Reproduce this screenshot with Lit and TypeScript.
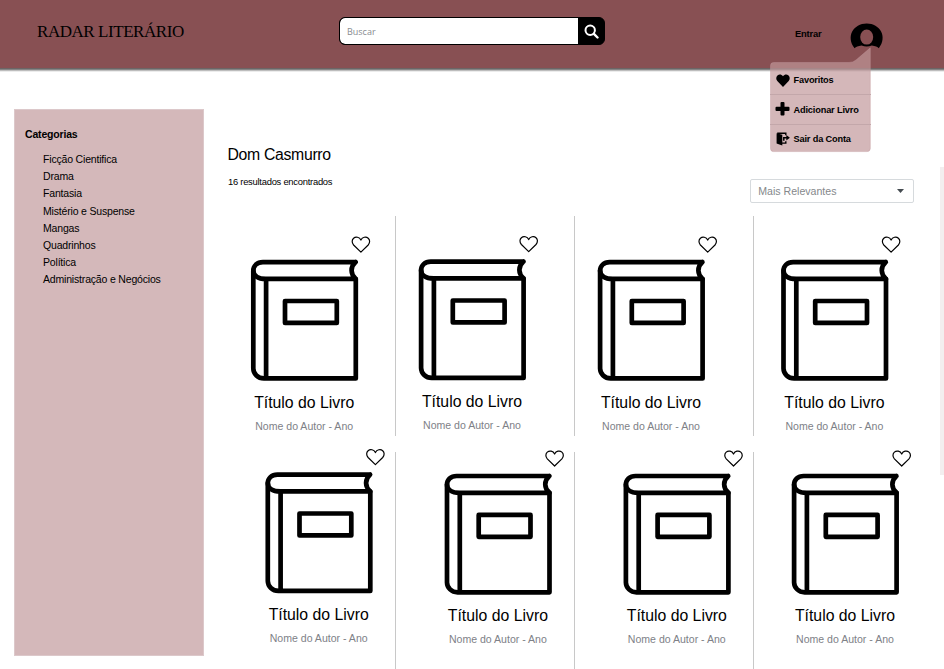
import { LitElement, html, svg, css } from "lit";
import { customElement, property } from "lit/decorators.js";
import { styleMap } from "lit/directives/style-map.js";

const CATEGORIES = [
  "Ficção Cientifica",
  "Drama",
  "Fantasia",
  "Mistério e Suspense",
  "Mangas",
  "Quadrinhos",
  "Política",
  "Administração e Negócios",
];

// Offset of each card inside its grid cell.
const BOOKS = [
  [34.4, 20.5], [22.2, 20], [22.2, 20.5], [26.6, 20.5],
  [48.9, -3], [48.1, -1.6], [48, -1.6], [37.2, -1.6],
].map(([dx, dy]) => ({ title: "Título do Livro", author: "Nome do Autor - Ano", dx, dy }));

const heartPath =
  "M9.5 15.6 L2.2 8.5 C0.2 6.3 0.4 3.2 2.2 1.7 C4.4 -0.2 8 0.5 9.5 3.6 C11 0.5 14.6 -0.2 16.8 1.7 C18.6 3.2 18.8 6.3 16.8 8.5 Z";

const menuIcons = {
  heart: svg`<path d="M7 14 L1.3 8 C-.3 6.2 0 3.5 1.7 2.2 C3.4 .9 5.7 1.4 7 3.3 C8.3 1.4 10.6 .9 12.3 2.2 C14 3.5 14.3 6.2 12.7 8 Z"/>`,
  plus: svg`<path d="M5.5 -1h2q1 0 1 1v3.7h4q1 0 1 1v2.2q0 1-1 1H8.5v3.7q0 1-1 1H5.5q-1 0-1-1V7.9H.5q-1 0-1-1V4.7q0-1 1-1h4V0q0-1 1-1z"/>`,
  exit: svg`<path d="M1.2 1.300 H9.800 V3.300 M9.800 9.300 V11.100 H6" fill="none" stroke="#000" stroke-width="1.400"/>
    <path d="M.6 1.200 L6.300 2.800 V13.600 L.6 11.500 Z"/>
    <path d="M7.800 8.800 V5.800 H11" fill="none" stroke="#000" stroke-width="1.500"/>
    <path d="M10.300 3 L13.900 5.800 L10.300 8.600 Z"/>`,
};

@customElement("book-card")
export class BookCard extends LitElement {
  @property() heading = "";
  @property() author = "";

  static styles = css`
    :host { display: block; width: 120px; font-family: "Liberation Sans", Arial, sans-serif; }
    .heart { display: block; margin-left: 100.5px; overflow: visible; }
    .book { display: block; margin-top: 7px; overflow: visible; }
    .text { width: 107.6px; text-align: center; white-space: nowrap; }
    .title { font-size: 15.8px; line-height: 20px; margin-top: 11.3px; color: #000; }
    .author { font-size: 10.55px; line-height: 14px; margin-top: 5.8px; color: #7e8187; }
  `;

  render() {
    return html`
      <svg class="heart" width="19" height="16" viewBox="0 0 19 16">
        <path d=${heartPath} fill="#fff" stroke="#000" stroke-width="1.2" stroke-linejoin="round" />
      </svg>
      <svg class="book" width="107" height="122" viewBox="0 0 107 122" fill="none"
        stroke="#000" stroke-width="4.7" stroke-linejoin="round" stroke-linecap="round">
        <path d="M105.2 2.6 H12.5 C6.5 2.6 2.9 6.5 2.9 11 C2.9 15.8 7 19.4 15.5 19.4 H105.400 C99.800 14.500 99.800 7.500 105.200 2.600" />
        <path d="M2.9 11 V109 C3 114.5 7.5 118.8 13.5 118.9 H105.4 V19.5 M15.7 20 V118.5" />
        <rect x="34.6" y="41.5" width="51.8" height="21.9" />
      </svg>
      <div class="text title">${this.heading}</div>
      <div class="text author">${this.author}</div>
    `;
  }
}

@customElement("user-menu")
export class UserMenu extends LitElement {
  static styles = css`
    :host { display: block; width: 101px; height: 106px; font-family: "Liberation Sans", Arial, sans-serif; }
    .shape { position: absolute; inset: 0; overflow: visible; }
    .list { position: relative; padding-top: 18px; }
    .item {
      display: flex; align-items: center; gap: 4px; height: 30px; padding-left: 6px;
      box-sizing: border-box; font-size: 9.2px; font-weight: 700; white-space: nowrap; letter-spacing: -0.15px;
      border-bottom: 1px solid #c3a7aa;
    }
    .item:last-child { border-bottom: 0; height: 27.5px; }
    .icon { flex: none; overflow: visible; }
  `;

  render() {
    const items = [
      { icon: menuIcons.heart, label: "Favoritos" },
      { icon: menuIcons.plus, label: "Adicionar Livro" },
      { icon: menuIcons.exit, label: "Sair da Conta" },
    ];
    return html`
      <svg class="shape" width="101" height="106" viewBox="0 0 101 106">
        <path d="M3.5 15.5 H79 Q83 15.5 86 13 L100.3 .8 V101.5 Q100.3 104.6 97 104.6 H3.5 Q.5 104.6 .5 101.5 V18.5 Q.5 15.5 3.5 15.5 Z"
          fill="rgba(192,151,154,.69)" stroke="rgba(192,151,154,.5)" stroke-width=".8" />
      </svg>
      <div class="list">
        ${items.map((i) => html`
          <div class="item">
            <svg class="icon" width="14" height="14" viewBox="0 0 14 14">${i.icon}</svg>
            <span>${i.label}</span>
          </div>`)}
      </div>
    `;
  }
}

@customElement("app-root")
export class AppRoot extends LitElement {
  static styles = css`
    :host {
      display: block; position: relative; width: 944px; height: 669px; overflow: hidden;
      background: #fff; color: #000; font-family: "Liberation Sans", Arial, sans-serif;
    }
    .header {
      display: flex; align-items: flex-start; height: 68px; background: #885053;
      box-shadow: 0 1px 0 #6c6565, 0 2px 0 #858585, 0 3px 0 #bdbdbd, 0 4px 0 #ececec;
    }
    .brand {
      width: 301.5px; padding: 20.5px 0 0 37px; font-family: "Liberation Serif", serif;
      font-size: 17px; line-height: 22px; letter-spacing: -0.45px; white-space: nowrap;
    }
    .search {
      display: flex; margin-top: 17px; width: 266.5px; height: 28px; box-sizing: border-box;
      border: 1.5px solid #000; border-radius: 6px; background: #000; overflow: hidden;
    }
    .field {
      flex: 1; background: #fff; border-radius: 5px 0 0 5px; padding-left: 7.5px;
      font: 9px/27px "Open Sans", sans-serif; color: #888c90;
    }
    .go { width: 26px; display: flex; align-items: center; justify-content: center; }
    .enter { margin: 28px 0 0 190px; width: 55px; font-size: 9.4px; line-height: 12px; font-weight: 700; letter-spacing: -0.2px; }
    .avatar { margin-top: 22.5px; overflow: visible; }
    .menu { position: absolute; left: 769.5px; top: 47px; z-index: 2; }
    .body { display: flex; height: 601px; }
    .sidebar {
      margin: 41px 0 0 14px; width: 190px; height: 547px; box-sizing: border-box;
      background: #d4b8ba; border: 1px solid #dcc8ca; padding: 17px 0 0 10px;
    }
    .heading { font-size: 10.5px; line-height: 14px; font-weight: 700; margin-bottom: 10.3px; letter-spacing: -0.18px; }
    .category { padding-left: 18px; font-size: 10.5px; line-height: 17.1px; white-space: nowrap; letter-spacing: -0.18px; }
    .results { width: 740px; }
    .top { display: flex; justify-content: space-between; height: 147.5px; }
    .query { padding: 76.5px 0 0 23.5px; font-size: 15.8px; line-height: 20px; letter-spacing: -0.32px; }
    .count { padding: 10.5px 0 0 24px; font-size: 9.4px; line-height: 14px; letter-spacing: -0.25px; }
    .sort {
      display: flex; align-items: center; justify-content: space-between; margin: 110.5px 30.5px 0 0;
      width: 163.5px; height: 24px; box-sizing: border-box; padding: 0 9px 0 7.2px;
      border: 1px solid #d6dadd; border-radius: 2px; font-size: 10.6px; color: #85888b;
    }
    .grid {
      display: grid; grid-template-columns: 180px 179px 179px 190px;
      grid-template-rows: 220.5px 217px; row-gap: 16px; margin-left: 12px;
    }
    .cell { border-right: 1px solid #c8c8c8; box-sizing: border-box; }
    .cell:nth-child(4n) { border-right: 0; }
    .scroll { position: absolute; left: 940px; top: 167px; width: 4px; height: 308px; background: #f3eeef; }
  `;

  render() {
    return html`
      <header class="header">
        <div class="brand">RADAR LITERÁRIO</div>
        <div class="search">
          <div class="field">Buscar</div>
          <div class="go">
            <svg width="15" height="15" viewBox="0 0 15 15" fill="none" stroke="#fff" stroke-linecap="round">
              <circle cx="6.2" cy="6.2" r="4.7" stroke-width="2" />
              <path d="M9.9 9.9 L13.5 13.5" stroke-width="2.4" />
            </svg>
          </div>
        </div>
        <div class="enter">Entrar</div>
        <svg class="avatar" width="34" height="26" viewBox="0 0 34 26">
          <path d="M4.600 25.200 C-4.500 13.500 3.500 .4 16.700 .4 C29.900 .4 37.900 13.500 28.800 25.200 Q27 23.300 21.800 22.500 Q16.700 24.500 11.600 22.500 Q6.400 23.300 4.600 25.200 Z" />
          <ellipse cx="16.700" cy="14.100" rx="6.500" ry="7.500" fill="#885053" />
        </svg>
      </header>
      <user-menu class="menu"></user-menu>
      <main class="body">
        <nav class="sidebar">
          <div class="heading">Categorias</div>
          ${CATEGORIES.map((c) => html`<div class="category">${c}</div>`)}
        </nav>
        <section class="results">
          <div class="top">
            <div>
              <div class="query">Dom Casmurro</div>
              <div class="count">16 resultados encontrados</div>
            </div>
            <div class="sort">
              <span>Mais Relevantes</span>
              <svg width="7" height="4" viewBox="0 0 7 4"><path d="M0 0H7L3.5 4Z" fill="#444b50" /></svg>
            </div>
          </div>
          <div class="grid">
            ${BOOKS.map((b) => html`
              <div class="cell">
                <book-card .heading=${b.title} .author=${b.author}
                  style=${styleMap({ transform: `translate(${b.dx}px, ${b.dy}px)` })}></book-card>
              </div>`)}
          </div>
        </section>
      </main>
      <div class="scroll"></div>
    `;
  }
}
